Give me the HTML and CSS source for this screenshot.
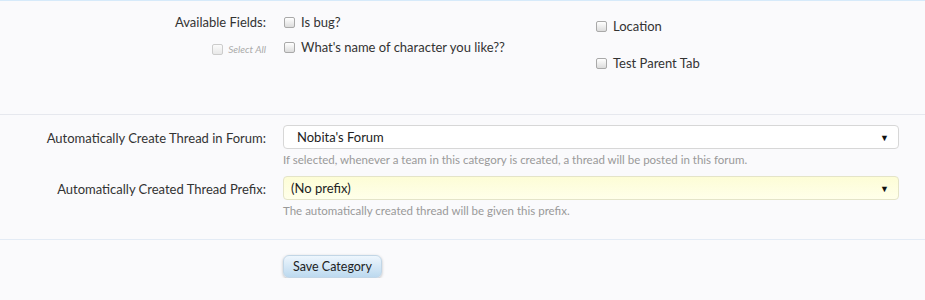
FILE: index.html
```html
<!DOCTYPE html>
<html lang="en">
<head>
    <meta charset="UTF-8">
    <title>Edit Category</title>
    <link rel="stylesheet" href="styles.css">
</head>
<body>
    <form class="xenForm">
        <fieldset class="fieldsRow">
            <dl class="ctrlUnit">
                <dt>
                    <span class="label">Available Fields:</span>
                    <label class="selectAll"><span class="checkBox faded"></span>Select All</label>
                </dt>
                <dd class="checkColumns">
                    <ul class="checkList">
                        <li><span class="checkBox"></span>Is bug?</li>
                        <li><span class="checkBox"></span>What's name of character you like??</li>
                    </ul>
                    <ul class="checkList wide">
                        <li><span class="checkBox"></span>Location</li>
                        <li><span class="checkBox"></span>Test Parent Tab</li>
                    </ul>
                </dd>
            </dl>
        </fieldset>

        <fieldset class="forumRow">
            <dl class="ctrlUnit">
                <dt><span class="label">Automatically Create Thread in Forum:</span></dt>
                <dd>
                    <div class="selectBox">
                        <span class="value indent">Nobita's Forum</span>
                        <span class="arrow">&#9660;</span>
                    </div>
                    <p class="explain">If selected, whenever a team in this category is created, a thread will be posted in this forum.</p>
                </dd>
            </dl>
            <dl class="ctrlUnit">
                <dt><span class="label">Automatically Created Thread Prefix:</span></dt>
                <dd>
                    <div class="selectBox prefix">
                        <span class="value">(No prefix)</span>
                        <span class="arrow">&#9660;</span>
                    </div>
                    <p class="explain">The automatically created thread will be given this prefix.</p>
                </dd>
            </dl>
        </fieldset>

        <div class="submitUnit">
            <button type="button" class="button">Save Category</button>
        </div>
    </form>
</body>
</html>
```

FILE: styles.css
```css
  body {
      margin: 0;
      background-color: #fafafc;
      font-family: Lato, "Open Sans", sans-serif;
      font-size: 13px;
      color: #333;
  }
  .xenForm {
      border-top: 1px solid #d6eafa;
  }
  fieldset {
      margin: 0;
      padding: 0;
      border: none;
  }
  .fieldsRow {
      height: 113px;
      border-bottom: 1px solid #e6e8ee;
  }
  .forumRow {
      padding-top: 10px;
      height: 125px;
      box-sizing: border-box;
      border-bottom: 1px solid #e3ebf5;
  }
  .ctrlUnit {
      display: grid;
      grid-template-columns: 266px 1fr;
      column-gap: 17px;
      margin: 0;
      padding-right: 26px;
  }
  .ctrlUnit dt {
      text-align: right;
  }
  .ctrlUnit dd {
      margin: 0;
  }
  .fieldsRow dt {
      padding-top: 13px;
  }
  .fieldsRow .label {
      display: block;
      line-height: 16px;
  }
  .forumRow .ctrlUnit dt {
      padding-top: 5px;
      line-height: 16px;
  }
  .forumRow .ctrlUnit + .ctrlUnit {
      margin-top: 8px;
  }

  .selectAll {
      display: inline-flex;
      align-items: center;
      margin-top: 13px;
      font-size: 10px;
      font-style: italic;
      color: #aaa;
  }

  .checkColumns {
      display: flex;
      padding-top: 12px;
  }
  .checkList {
      list-style: none;
      margin: 0;
      padding: 0;
      width: 312px;
  }
  .checkList li {
      display: flex;
      align-items: center;
      height: 18px;
      margin-bottom: 7px;
      padding-left: 1px;
  }
  .checkList.wide {
      padding-top: 4px;
  }
  .checkList.wide li {
      margin-bottom: 19px;
  }
  .checkBox {
      width: 9px;
      height: 9px;
      margin-right: 6px;
      border: 1px solid #a9a9a9;
      border-radius: 2px;
      background: linear-gradient(#ffffff, #dcdcdc);
      flex-shrink: 0;
  }
  .checkBox.faded {
      border-color: #ccc;
      background: linear-gradient(#fbfbfb, #e8e8e8);
      margin-right: 5px;
  }

  .selectBox {
      display: flex;
      align-items: center;
      justify-content: space-between;
      height: 24px;
      box-sizing: border-box;
      padding: 0 9px 0 7px;
      border: 1px solid #d7d7d7;
      border-radius: 4px;
      background-color: #fff;
      color: #222;
  }
  .selectBox .indent {
      padding-left: 6px;
  }
  .selectBox.prefix {
      background: linear-gradient(#fdfdd6, #ffffea);
      border-color: #e4e4c8;
  }
  .arrow {
      font-size: 9px;
      color: #111;
  }
  .explain {
      margin: 3px 0 0;
      font-size: 11.5px;
      line-height: 16px;
      color: #999;
  }

  .submitUnit {
      padding: 15px 0 0 283px;
  }
  .button {
      height: 23px;
      padding: 0 9px;
      border: 1px solid #c2d6e6;
      border-radius: 6px;
      background: linear-gradient(#eef6fd, #bcd9ef);
      box-shadow: 0 1px 3px rgba(0, 0, 0, 0.25);
      font-family: Lato, "Open Sans", sans-serif;
      font-size: 12.5px;
      color: #222;
      cursor: pointer;
  }
```
